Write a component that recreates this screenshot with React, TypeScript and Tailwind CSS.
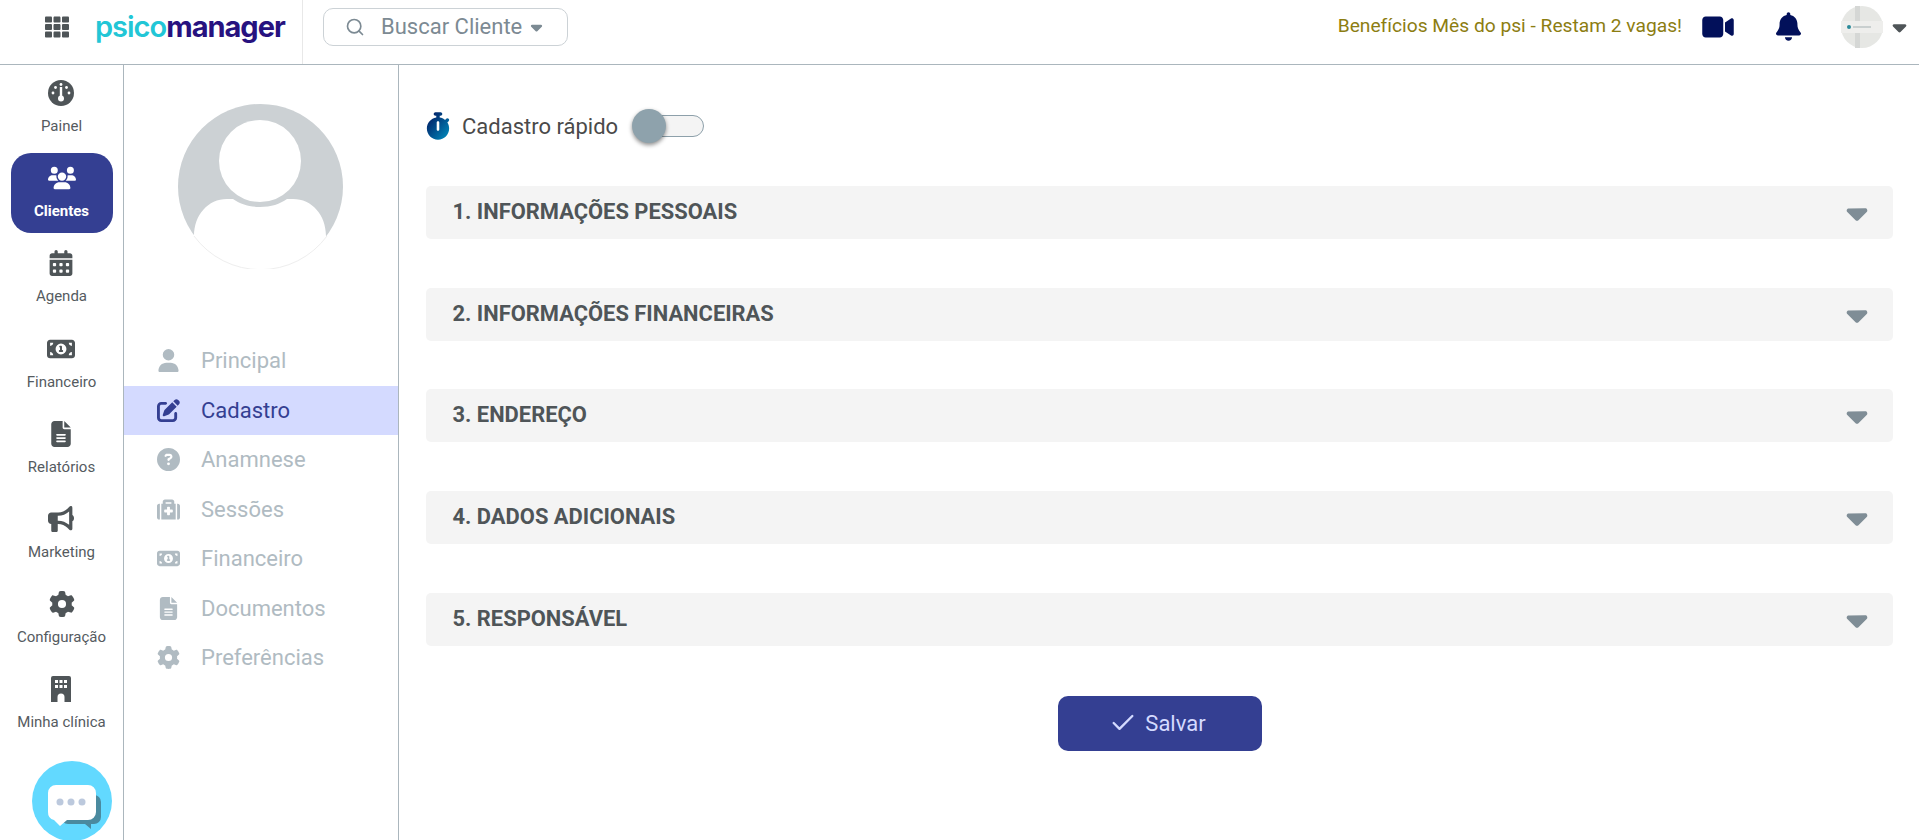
import React from 'react';
import {
  FaBell,
  FaBullhorn,
  FaCalendarDays,
  FaCaretDown,
  FaCircleQuestion,
  FaFileLines,
  FaGear,
  FaMoneyBill1,
  FaPenToSquare,
  FaStopwatch,
  FaUser,
  FaUsers,
  FaVideo,
} from 'react-icons/fa6';
import { FaMedkit, FaTh } from 'react-icons/fa';
import { Check, Search } from 'lucide-react';

function GaugeIcon({ className }: { className?: string }): JSX.Element {
  return (
    <svg viewBox="0 0 26 26" className={className}>
      <circle cx="13" cy="13" r="13" fill="currentColor" />
      <rect x="11.800" y="7" width="2.400" height="11" fill="#fff" />
      <circle cx="13" cy="18.500" r="3" fill="#fff" />
      <circle cx="13" cy="4.500" r="1.400" fill="#fff" />
      <circle cx="7.500" cy="7.500" r="1.400" fill="#fff" />
      <circle cx="18.500" cy="7.500" r="1.400" fill="#fff" />
      <circle cx="5" cy="13" r="1.400" fill="#fff" />
      <circle cx="21" cy="13" r="1.400" fill="#fff" />
    </svg>
  );
}

function ClinicIcon({ className }: { className?: string }): JSX.Element {
  return (
    <svg viewBox="0 0 20 26" className={className}>
      <path d="M2 0h16a2 2 0 0 1 2 2v24h-6.500v-5a3.500 3.500 0 0 0-7 0v5H0V2a2 2 0 0 1 2-2z" fill="currentColor" />
      <rect x="4" y="4" width="3" height="3" fill="#fff" />
      <rect x="8.500" y="4" width="3" height="3" fill="#fff" />
      <rect x="13" y="4" width="3" height="3" fill="#fff" />
      <rect x="4" y="9" width="3" height="3" fill="#fff" />
      <rect x="8.500" y="9" width="3" height="3" fill="#fff" />
      <rect x="13" y="9" width="3" height="3" fill="#fff" />
    </svg>
  );
}

const railItems = [
  { label: 'Painel', icon: GaugeIcon },
  { label: 'Clientes', icon: FaUsers, active: true },
  { label: 'Agenda', icon: FaCalendarDays },
  { label: 'Financeiro', icon: FaMoneyBill1 },
  { label: 'Relatórios', icon: FaFileLines },
  { label: 'Marketing', icon: FaBullhorn },
  { label: 'Configuração', icon: FaGear },
  { label: 'Minha clínica', icon: ClinicIcon },
];

const clientNav = [
  { label: 'Principal', icon: FaUser },
  { label: 'Cadastro', icon: FaPenToSquare, active: true },
  { label: 'Anamnese', icon: FaCircleQuestion },
  { label: 'Sessões', icon: FaMedkit },
  { label: 'Financeiro', icon: FaMoneyBill1 },
  { label: 'Documentos', icon: FaFileLines },
  { label: 'Preferências', icon: FaGear },
];

const sections = [
  '1. INFORMAÇÕES PESSOAIS',
  '2. INFORMAÇÕES FINANCEIRAS',
  '3. ENDEREÇO',
  '4. DADOS ADICIONAIS',
  '5. RESPONSÁVEL',
];

function Header(): JSX.Element {
  return (
    <header className="flex h-[65px] shrink-0 items-center border-b border-[#abb6bd] bg-white">
      <div className="flex h-full w-[303px] items-center border-r border-[#e8e8e8] pb-[11px] pl-[45px]">
        <FaTh className="h-[24px] w-[24px] text-[#4f5558]" />
        <div className="ml-[26px] flex text-[29px] leading-none tracking-[-1px] font-['Inter',sans-serif]">
          <span className="font-semibold text-[#22c6d6]">psico</span>
          <span className="font-bold text-[#27127f]">manager</span>
        </div>
      </div>
      <div className="mb-[11px] ml-[20px] flex h-[38px] w-[245px] items-center rounded-[10px] border border-[#ccd2d6] pl-[21px] text-[#7c8a93]">
        <Search className="h-[20px] w-[20px]" strokeWidth={2} />
        <span className="ml-[16px] text-[22px]">Buscar Cliente</span>
        <FaCaretDown className="ml-[8px] h-[18px] w-[13px]" />
      </div>
      <div className="mb-[11px] ml-auto flex items-center pr-[12px]">
        <span className="text-[19.200px] text-[#8c7d11]">Benefícios Mês do psi - Restam 2 vagas!</span>
        <FaVideo className="ml-[20px] h-[28px] w-[32px] text-[#02105a]" />
        <FaBell className="ml-[42px] h-[29px] w-[25px] text-[#02105a]" />
        <svg viewBox="0 0 42 42" className="ml-[40px] h-[42px] w-[42px]">
          <circle cx="21" cy="21" r="21" fill="#e6e7e4" />
          <rect x="14" y="0" width="5" height="42" fill="#d5d7d5" />
          <rect x="0" y="15" width="42" height="12" fill="#eeeeec" />
          <circle cx="8" cy="21" r="2" fill="#2a8a9a" />
          <rect x="12" y="20" width="18" height="2" fill="#c9cfcf" />
        </svg>
        <FaCaretDown className="ml-[9px] h-[22px] w-[15px] text-[#4f5558]" />
      </div>
    </header>
  );
}

function Rail(): JSX.Element {
  return (
    <nav className="flex w-[124px] shrink-0 flex-col border-r border-[#abb6bd] bg-white">
      {railItems.map((item) => {
        const Icon = item.icon;
        return (
          <div key={item.label} className="flex h-[85.200px] shrink-0 items-center justify-center">
            <div
              className={
                item.active
                  ? 'flex h-[80px] w-[102px] flex-col items-center justify-center gap-[11px] rounded-[20px] bg-[#343f92] text-white'
                  : 'flex flex-col items-center gap-[11px] text-[#4f5558]'
              }
            >
              <Icon className="h-[26px] w-[28px]" />
              <span
                className={
                  item.active
                    ? 'text-[15px] leading-[18px] font-bold text-white'
                    : 'text-[15px] leading-[18px] text-[#555b5f]'
                }
              >
                {item.label}
              </span>
            </div>
          </div>
        );
      })}
      <svg viewBox="0 0 80 80" className="mt-[14px] ml-[32px] h-[80px] w-[80px] shrink-0">
        <circle cx="40" cy="40" r="40" fill="#62d9ff" />
        <path d="M38 34h24a7 7 0 0 1 7 7v15a7 7 0 0 1-7 7h-3v5l-6-5H36a7 7 0 0 1-7-7V41a7 7 0 0 1 9-7z" fill="#4a8a9f" />
        <path d="M24 24h32a8 8 0 0 1 8 8v19a8 8 0 0 1-8 8H35l-7 6-6-6a8 8 0 0 1-6-8V32a8 8 0 0 1 8-8z" fill="#ffffff" />
        <circle cx="28" cy="41" r="3.500" fill="#bcc9dd" />
        <circle cx="39" cy="41" r="3.500" fill="#bcc9dd" />
        <circle cx="50" cy="41" r="3.500" fill="#bcc9dd" />
      </svg>
    </nav>
  );
}

function ClientNav(): JSX.Element {
  return (
    <aside className="flex w-[275px] shrink-0 flex-col border-r border-[#abb6bd] bg-white pt-[39px]">
      <svg viewBox="0 0 165 165" className="ml-[54px] h-[165px] w-[165px] shrink-0">
        <circle cx="82.500" cy="82.500" r="82.500" fill="#ccd1d4" />
        <circle cx="82" cy="57" r="41" fill="#ffffff" />
        <path d="M16 132c0-21 14-37 33-37h6c7 5 16 8 27 8s20-3 27-8h6c19 0 33 16 33 37v34H16z" fill="#ffffff" />
        <path d="M16 132a82.500 82.500 0 0 0 133 0" fill="none" stroke="#eeeeee" strokeWidth="1" />
      </svg>
      <div className="mt-[67px] flex flex-col">
        {clientNav.map((item) => {
          const Icon = item.icon;
          return (
            <div
              key={item.label}
              className={
                item.active
                  ? 'flex h-[49.500px] items-center bg-[#d4daff] pl-[33px] text-[#343f92]'
                  : 'flex h-[49.500px] items-center pl-[33px] text-[#b0bbc2]'
              }
            >
              <Icon className="h-[23px] w-[23px]" />
              <span className="ml-[21px] text-[22px]">{item.label}</span>
            </div>
          );
        })}
      </div>
    </aside>
  );
}

function Form(): JSX.Element {
  return (
    <main className="flex min-w-0 flex-1 flex-col bg-white pt-[46px] pr-[26px] pl-[27px]">
      <div className="flex h-[30px] items-center">
        <svg className="h-0 w-0">
          <defs>
            <linearGradient id="stopwatch-fill" x1="0" y1="0" x2="1" y2="1">
              <stop offset="0%" stopColor="#02105a" />
              <stop offset="100%" stopColor="#0090c0" />
            </linearGradient>
          </defs>
        </svg>
        <FaStopwatch className="h-[28px] w-[24px]" fill="url(#stopwatch-fill)" />
        <span className="ml-[12px] text-[22px] text-[#4a4a4a]">Cadastro rápido</span>
        <div className="relative ml-[14px] h-[22px] w-[72px]">
          <div className="absolute top-0 right-0 h-[22px] w-[58px] rounded-full border border-[#8da0aa] bg-[#f4f4f4]" />
          <div className="absolute top-[-6px] left-0 h-[34px] w-[34px] rounded-full bg-[#8ea2ac] shadow-[0_2px_4px_rgba(0,0,0,0.45)]" />
        </div>
      </div>
      <div className="mt-[45px] flex flex-col gap-[48.700px]">
        {sections.map((title) => (
          <div key={title} className="flex h-[53px] items-center justify-between rounded-[5px] bg-[#f4f4f4] pr-[25px] pl-[26.500px]">
            <span className="text-[21.900px] font-bold text-[#4f5558]">{title}</span>
            <FaCaretDown className="h-[33px] w-[22px] text-[#7f8d96]" />
          </div>
        ))}
      </div>
      <button className="mx-auto mt-[50px] flex h-[55px] w-[204px] items-center justify-center gap-[8px] rounded-[10px] bg-[#343f92] pr-[4px] text-[22px] text-[#d4daff]">
        <Check className="h-[28px] w-[28px]" strokeWidth={2} />
        Salvar
      </button>
    </main>
  );
}

export default function App(): JSX.Element {
  return (
    <div className="flex h-[840px] flex-col overflow-hidden bg-white font-[Roboto,sans-serif]">
      <Header />
      <div className="flex min-h-0 flex-1">
        <Rail />
        <ClientNav />
        <Form />
      </div>
    </div>
  );
}
